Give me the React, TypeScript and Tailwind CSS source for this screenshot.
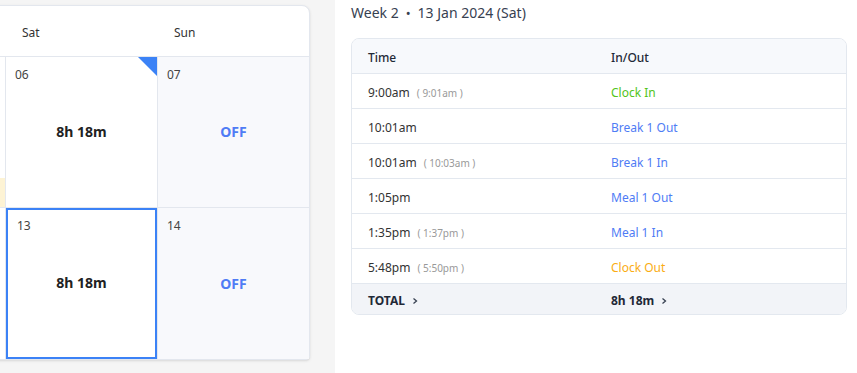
import React from "react";

const punches = [
  { time: "9:00am", actual: "9:01am", label: "Clock In", color: "text-[#52c41a]" },
  { time: "10:01am", actual: "", label: "Break 1 Out", color: "text-[#4f7cf5]" },
  { time: "10:01am", actual: "10:03am", label: "Break 1 In", color: "text-[#4f7cf5]" },
  { time: "1:05pm", actual: "", label: "Meal 1 Out", color: "text-[#4f7cf5]" },
  { time: "1:35pm", actual: "1:37pm", label: "Meal 1 In", color: "text-[#4f7cf5]" },
  { time: "5:48pm", actual: "5:50pm", label: "Clock Out", color: "text-[#faad14]" },
];

function Chevron() {
  return (
    <svg width="6" height="8" viewBox="0 0 6 8" className="ml-[7px]">
      <path d="M1.5 1.5L4.5 4L1.5 6.5" fill="none" stroke="#374151" strokeWidth="1.3" />
    </svg>
  );
}

function DayCell({
  date,
  hours,
  off,
  selected,
  flagged,
  note,
}: {
  date?: string;
  hours?: string;
  off?: boolean;
  selected?: boolean;
  flagged?: boolean;
  note?: boolean;
}) {
  return (
    <div
      className={
        "relative flex flex-col " +
        (off ? "bg-[#f8f9fc] " : "bg-white ") +
        (selected ? "border-2 border-[#3b82f6] pl-[9px] pt-[8px]" : "pl-[9px] pt-[10px]")
      }
    >
      {flagged && (
        <div className="absolute top-0 right-0 w-0 h-0 border-l-[19px] border-l-transparent border-t-[19px] border-t-[#3b82f6]" />
      )}
      <div className="text-xs leading-4 h-4 text-[#444]">{date}</div>
      <div className="flex-1 flex items-center justify-center pr-[9px] pb-[26px]">
        {off ? (
          <span className="text-sm font-bold text-[#4f7cf5]">OFF</span>
        ) : (
          hours && <span className="text-sm font-bold text-[#222]">{hours}</span>
        )}
      </div>
      {note && <div className="absolute left-0 right-0 bottom-0 h-[29px] bg-[#fdf3d4]" />}
    </div>
  );
}

export default function App() {
  return (
    <div className="w-[857px] h-[373px] flex overflow-hidden font-['Noto_Sans',sans-serif]">
      <div className="w-[335px] shrink-0 bg-[#f5f5f5] overflow-hidden pt-[5px]">
        <div className="ml-[-147px] w-[457px] bg-white border border-[#e3e7ee] rounded-tr-lg rounded-br-sm shadow-sm">
          <div className="grid grid-cols-[152px_152px_151px] h-[51px] pt-[3px] border-b border-[#e3e7ee] text-xs text-[#333]">
            <div />
            <div className="flex items-center pl-4">Sat</div>
            <div className="flex items-center pl-4">Sun</div>
          </div>
          <div className="grid grid-cols-[151px_151px_151px] grid-rows-[150px_151px] gap-px bg-[#e3e7ee]">
            <DayCell note />
            <DayCell date="06" hours="8h 18m" flagged />
            <DayCell date="07" off />
            <DayCell />
            <DayCell date="13" hours="8h 18m" selected />
            <DayCell date="14" off />
          </div>
        </div>
      </div>

      <div className="flex-1 bg-white pl-4 pr-[10px] pt-[3px]">
        <div className="flex items-center text-sm leading-5 text-[#374151]">
          <span>Week 2</span>
          <span className="mx-[7px] text-[13px]">•</span>
          <span>13 Jan 2024 (Sat)</span>
        </div>

        <div className="mt-[15px] border border-[#e3e8ef] rounded-lg overflow-hidden text-xs">
          <div className="grid grid-cols-[243px_1fr] h-[35px] pt-[3px] items-center bg-[#f7f9fc] border-b border-[#e3e8ef] font-medium text-[#1f2937]">
            <div className="pl-4">Time</div>
            <div className="pl-4">In/Out</div>
          </div>
          {punches.map((p, i) => (
            <div
              key={i}
              className="grid grid-cols-[243px_1fr] h-[35px] pt-[3px] items-center border-b border-[#e3e8ef] text-[#333]"
            >
              <div className="pl-4 flex items-baseline">
                <span>{p.time}</span>
                {p.actual && (
                  <span className="ml-[7px] text-[10px] text-[#999]">( {p.actual} )</span>
                )}
              </div>
              <div className={"pl-4 " + p.color}>{p.label}</div>
            </div>
          ))}
          <div className="grid grid-cols-[243px_1fr] h-[30px] pt-[3px] items-center bg-[#f2f4f8] font-bold text-[#1f2937]">
            <div className="pl-4 flex items-center">
              TOTAL
              <Chevron />
            </div>
            <div className="pl-4 flex items-center">
              8h 18m
              <Chevron />
            </div>
          </div>
        </div>
      </div>
    </div>
  );
}
